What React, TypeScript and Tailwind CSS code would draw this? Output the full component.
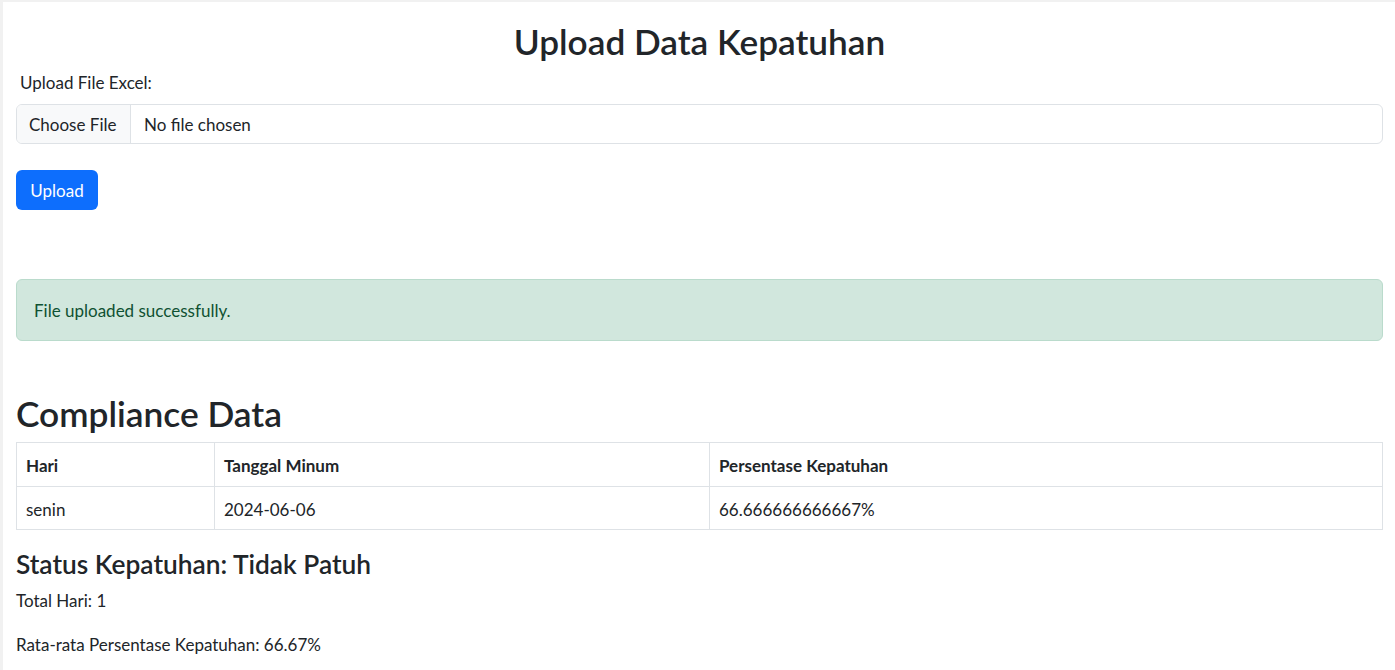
import React from "react";

export default function App() {
  const font = { fontFamily: "Lato, 'Noto Sans', sans-serif" };
  return (
    <div
      className="min-h-[670px] bg-white border-l-[3px] border-t-[2px] border-[#f1f1f1] pl-[13px] pr-[12px] text-[#212529] text-[17px] leading-[25.6px] font-['Lato','Noto_Sans',sans-serif]"
      style={font}
    >
      <h2 className="mt-[19px] mb-[8px] text-center text-[35.2px] leading-[41px] font-semibold">
        Upload Data Kepatuhan
      </h2>
      <div className="pl-[4px] mb-[8px]">Upload File Excel:</div>
      <div className="flex h-[40px] rounded-[6px] border border-[#dee2e6] overflow-hidden">
        <div className="flex items-center pt-[2px] px-[12px] bg-[#f8f9fa] border-r border-[#dee2e6] w-[114px]">
          Choose File
        </div>
        <div className="flex items-center pt-[2px] pl-[13px]">No file chosen</div>
      </div>
      <button className="mt-[26px] h-[40px] w-[82px] pt-[2px] rounded-[6px] bg-[#0d6efd] text-white">
        Upload
      </button>
      <div className="mt-[69px] h-[62px] rounded-[6px] border border-[#badbcc] bg-[#d1e7dd] text-[#0f5132] flex items-center pt-[3px] px-[17px]">
        File uploaded successfully.
      </div>
      <h2 className="mt-[52px] mb-[8px] text-[35.3px] leading-[41px] font-semibold">Compliance Data</h2>
      <table className="w-full border-collapse border border-[#dee2e6]">
        <thead>
          <tr className="h-[44px]">
            <th className="w-[198px] border border-[#dee2e6] pt-[4px] px-[9px] text-left font-bold">Hari</th>
            <th className="w-[495px] border border-[#dee2e6] pt-[4px] px-[9px] text-left font-bold">Tanggal Minum</th>
            <th className="border border-[#dee2e6] pt-[4px] px-[9px] text-left font-bold">Persentase Kepatuhan</th>
          </tr>
        </thead>
        <tbody>
          <tr className="h-[43px]">
            <td className="border border-[#dee2e6] pt-[4px] px-[9px]">senin</td>
            <td className="border border-[#dee2e6] pt-[4px] px-[9px]">2024-06-06</td>
            <td className="border border-[#dee2e6] pt-[4px] px-[9px]">66.666666666667%</td>
          </tr>
        </tbody>
      </table>
      <h4 className="mt-[19px] mb-[8px] text-[26.3px] leading-[31px] font-semibold">
        Status Kepatuhan: Tidak Patuh
      </h4>
      <p className="mb-[19px]">Total Hari: 1</p>
      <p>Rata-rata Persentase Kepatuhan: 66.67%</p>
    </div>
  );
}
